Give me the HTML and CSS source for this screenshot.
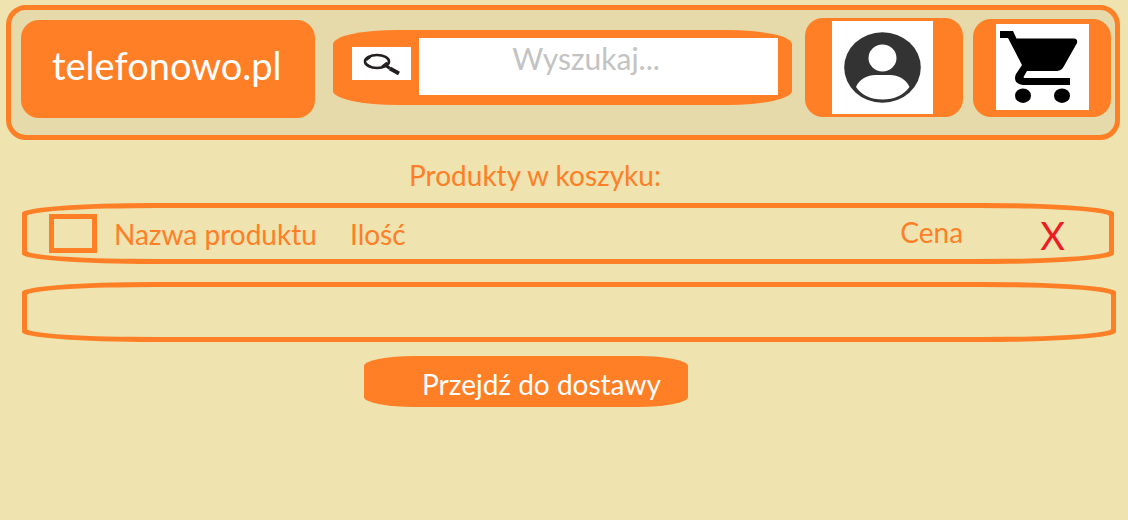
FILE: index.html
```
<!DOCTYPE html>
<html lang="pl">
<head>
<meta charset="utf-8">
<title>telefonowo.pl</title>
<link rel="stylesheet" href="styles.css">
</head>
<body>
<header class="topbar">
  <a class="logo" href="#">telefonowo.pl</a>
  <form class="search" role="search">
    <button class="search-button" type="submit" aria-label="Szukaj">
      <svg class="search-icon" viewBox="0 0 38 22" aria-hidden="true">
        <ellipse cx="14" cy="8.500" rx="12" ry="6.500" fill="none" stroke="#231f20" stroke-width="2.600"/>
        <path d="M3.500 11l4 2.500M19 13.500l5-4M3.500 7l4-3" fill="none" stroke="#231f20" stroke-width="2"/>
        <path d="M23.500 13L27 15.500" stroke="#231f20" stroke-width="3"/>
        <path d="M27 15.500L36 20.500" stroke="#231f20" stroke-width="4"/>
      </svg>
    </button>
    <input class="search-input" type="search" placeholder="Wyszukaj..." aria-label="Wyszukaj">
  </form>
  <a class="tile tile-account" href="#" aria-label="Konto">
    <svg class="account-icon" viewBox="0 0 101 93" preserveAspectRatio="none" aria-hidden="true">
      <rect width="101" height="93" fill="#fff"/>
      <ellipse cx="50.500" cy="46.500" rx="38.300" ry="35.300" fill="#333"/>
      <ellipse cx="50.500" cy="37" rx="14" ry="13.500" fill="#fff"/>
      <path d="M24 66C27 58 36 54 43 54H58C66 54 74 58 77.500 66C72 74 62 78.500 50.500 78.500S29 74 24 66Z" fill="#fff"/>
    </svg>
  </a>
  <a class="tile tile-cart" href="#" aria-label="Koszyk">
    <svg class="cart-icon" viewBox="0 0 93 86" preserveAspectRatio="none" aria-hidden="true">
      <rect width="93" height="86" fill="#fff"/>
      <path d="M4 7H17L20.500 14.500H78Q82 15 81 19L68 42Q66 46.500 61 47H31L27.500 53Q27.500 54 29 54H74V61H27Q19 60 19 54Q19 52 20 50L26 41L12 14H4Z"/>
      <ellipse cx="27" cy="71.700" rx="8" ry="7.200"/>
      <ellipse cx="66" cy="71.700" rx="8" ry="7.200"/>
    </svg>
  </a>
</header>
<main class="cart">
  <h1 class="cart-title">Produkty w koszyku:</h1>
  <ul class="cart-list">
    <li class="cart-row cart-row-filled">
      <div class="cart-row-body">
        <input class="check" type="checkbox" id="product">
        <label class="name" for="product">Nazwa produktu</label>
        <span class="quantity">Ilość</span>
        <span class="price">Cena</span>
        <button class="remove" type="button" aria-label="Usuń">X</button>
      </div>
    </li>
    <li class="cart-row">
      <div class="cart-row-body"></div>
    </li>
  </ul>
  <div class="actions">
    <button class="checkout" type="button">Przejdź do dostawy</button>
  </div>
</main>
</body>
</html>
```
FILE: styles.css
```
* {
  box-sizing: border-box;
}

body {
  margin: 0;
  background: #efe3af;
  color: #ff7f27;
  font-family: Lato, "Open Sans", sans-serif;
  font-size: 28px;
  line-height: 30px;
}

button,
input {
  margin: 0;
  padding: 0;
  border: 0;
  font: inherit;
}

.topbar {
  display: grid;
  grid-template-columns: 312fr 472fr 168fr 138fr;
  align-items: start;
  margin: 5px 8px 0 6px;
  padding: 8px 4px 17px 10px;
  border: 5px solid #ff7f27;
  border-radius: 20px;
  background: #e7daaa;
}

.logo {
  margin: 2px 18px 0 0;
  padding: 21px 0 29px 31px;
  border-radius: 18px;
  background: #ff7f27;
  color: #fff;
  font-size: 38px;
  line-height: 48px;
  text-decoration: none;
}

.search {
  display: flex;
  align-items: center;
  gap: 8px;
  min-width: 0;
  margin: 12px 13px 0 0;
  padding: 8px 14px 10px 19px;
  border-radius: 65px / 14px;
  background: #ff7f27;
}

.search-button {
  display: flex;
  align-items: center;
  justify-content: center;
  width: 59px;
  height: 33px;
  margin-bottom: 6px;
  background: #fff;
}

.search-icon {
  width: 38px;
  height: 22px;
}

.search-input {
  flex: 1;
  min-width: 0;
  height: 57px;
  padding: 0 0 18px;
  border-radius: 0;
  background: #fff;
  color: #555;
  font-size: 30px;
  text-align: center;
  appearance: none;
  outline: 0;
}

.search-input::placeholder {
  color: #c3c3c3;
  opacity: 1;
}

.tile {
  display: flex;
  border-radius: 18px;
  background: #ff7f27;
}

.tile-account {
  margin-right: 10px;
  padding: 3px 30px 3px 27px;
}

.tile-cart {
  margin-top: 1px;
  padding: 5px 22px 7px 23px;
}

.account-icon {
  width: 100%;
  height: 93px;
}

.cart-icon {
  width: 100%;
  height: 86px;
}

.cart {
  padding: 20px 12px 20px 22px;
}

.cart-title {
  margin: 0 68px 13px 0;
  font-size: 28px;
  font-weight: 400;
  text-align: center;
}

.cart-list {
  display: grid;
  gap: 18px;
  margin: 0 0 14px;
  padding: 0;
  list-style: none;
}

.cart-row {
  padding: 5px;
  border-radius: 130px / 10px;
  background: #ff7f27;
}

.cart-row-filled {
  margin-right: 2px;
}

.cart-row-body {
  display: flex;
  align-items: center;
  min-height: 50px;
  padding: 0 44px 0 22px;
  border-radius: 130px / 8px;
  background: #efe3af;
}

.check {
  width: 48px;
  height: 39px;
  margin-right: 17px;
  border: 5px solid #ff7f27;
  appearance: none;
}

.name {
  width: 236px;
}

.quantity {
  flex: 1;
}

.price {
  width: 140px;
  padding-bottom: 4px;
}

.remove {
  padding-top: 4px;
  background: transparent;
  color: #ed1c24;
  font-size: 38px;
  line-height: 47px;
}

.actions {
  display: flex;
  justify-content: center;
  padding-right: 86px;
}

.checkout {
  width: 324px;
  padding: 13px 0 8px 58px;
  border-radius: 50px / 10px;
  background: #ff7f27;
  color: #fff;
  text-align: left;
  white-space: nowrap;
}
```
